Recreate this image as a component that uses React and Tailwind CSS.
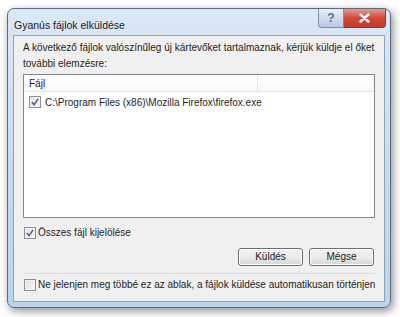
import React from 'react';

function Check({ checked }) {
  return (
    <span className="w-[12px] h-[12px] border border-[#8e8f8f] bg-gradient-to-br from-[#dcdcdc] to-[#fbfbfb] flex items-center justify-center shrink-0">
      <span className="w-[10px] h-[10px] border border-[#f4f4f4] flex items-center justify-center">
        {checked && (
          <svg width="8" height="8" viewBox="0 0 9 9">
            <path d="M1 4.5 L3.5 7.5 L8 1" fill="none" stroke="#4a5f97" strokeWidth="1.7" />
          </svg>
        )}
      </span>
    </span>
  );
}

function Btn({ children }) {
  return (
    <button className="w-[65px] h-[18px] rounded-[3px] border border-[#707070] bg-gradient-to-b from-[#f2f2f2] via-[#ebebeb] to-[#d6d6d6] text-[10px] text-[#222] leading-none shadow-[inset_0_0_0_1px_#fcfcfc]">
      {children}
    </button>
  );
}

export default function App() {
  return (
    <div className="w-[400px] h-[317px] bg-white pt-[8px] pl-[7px] font-['Liberation_Sans',sans-serif] text-[#1e1e1e]">
      <div className="w-[384px] h-[300px] rounded-[7px] border border-[#5b6b80] bg-gradient-to-b from-[#dbe8f5] via-[#c9dcef] to-[#bcd3ea] shadow-[2px_3px_8px_rgba(0,0,0,0.45)] flex flex-col">
        <div className="h-[26px] flex items-start justify-between">
          <span className="pl-[6px] pt-[11px] text-[10.5px] text-[#1b1b1b] leading-none">Gyanús fájlok elküldése</span>
          <div className="flex mr-[4px]">
            <span className="w-[26px] h-[19px] rounded-bl-[4px] border border-[#7d8fa8] border-t-0 bg-gradient-to-b from-[#e6eef8] to-[#b9cbe2] flex items-center justify-center text-[12px] font-bold text-[#5c6f8c] leading-none">?</span>
            <span className="w-[42px] h-[19px] rounded-br-[4px] border border-[#8a3a30] border-t-0 border-l-0 bg-gradient-to-b from-[#e59a8d] via-[#d0483a] to-[#c43a2b] flex items-center justify-center">
              <svg width="11" height="10" viewBox="0 0 11 10">
                <path d="M1.5 1.5 L9.5 8.5 M9.5 1.5 L1.5 8.5" stroke="#fff" strokeWidth="2.4" strokeLinecap="round" />
              </svg>
            </span>
          </div>
        </div>
        <div className="mx-[5px] mb-[5px] flex-1 border border-[#8da2bd] bg-[#f0f0f0] px-[9px] pt-[4px] flex flex-col text-[10px]">
          <p className="leading-[16px] whitespace-nowrap">
            A következő fájlok valószínűleg új kártevőket tartalmaznak, kérjük küldje el őket
            <br />
            további elemzésre:
          </p>
          <div className="mt-[2px] h-[144px] border border-[#828790] bg-white flex flex-col">
            <div className="h-[17px] flex border-b border-[#e5e5e5] bg-gradient-to-b from-white to-[#f7f8f9]">
              <span className="w-[234px] pl-[5px] border-r border-[#e5e5e5] flex items-center">Fájl</span>
            </div>
            <div className="h-[18px] mt-[1px] pl-[5px] flex items-center gap-[4px]">
              <Check checked />
              <span>C:\Program Files (x86)\Mozilla Firefox\firefox.exe</span>
            </div>
          </div>
          <div className="mt-[7px] flex items-center gap-[2px] pl-[1px]">
            <Check checked />
            <span>Összes fájl kijelölése</span>
          </div>
          <div className="mt-[8px] flex justify-end gap-[6px] pr-[1px]">
            <Btn>Küldés</Btn>
            <Btn>Mégse</Btn>
          </div>
          <div className="mt-[7px] h-px bg-[#d5dfe5]" />
          <div className="mt-[3px] flex items-center gap-[2px] pl-[1px] whitespace-nowrap">
            <Check />
            <span>Ne jelenjen meg többé ez az ablak, a fájlok küldése automatikusan történjen</span>
          </div>
        </div>
      </div>
    </div>
  );
}
